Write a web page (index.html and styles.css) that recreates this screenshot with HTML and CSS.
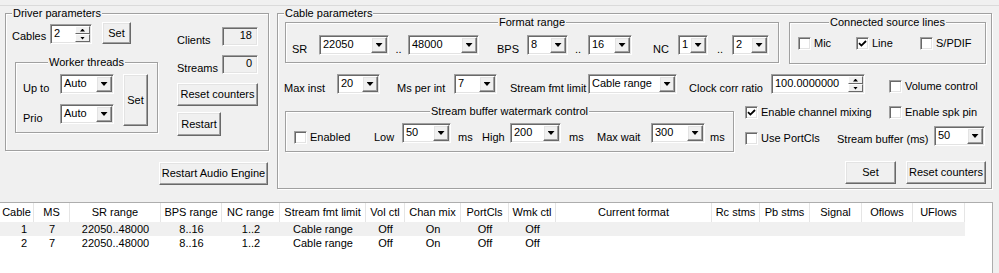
FILE: index.html
```html
<!DOCTYPE html>
<html lang="en">
<head>
  <meta charset="UTF-8">
  <title>Audio Cable Control Panel</title>
  <link rel="stylesheet" href="styles.css">
</head>
<body>
<div class="tabline"></div>
<div class="panel">
  <div class="left-col">
    <div class="group driver">
      <div class="group-title">Driver parameters</div>
      <div class="driver-body">
        <div class="drv-left">
          <div class="row cables-row">
            <span class="lbl w38">Cables</span>
            <div class="spin w42"><span class="val">2</span><span class="spin-btns"><span class="up"></span><span class="down"></span></span></div>
            <button class="btn set-small">Set</button>
          </div>
          <div class="group worker">
            <div class="group-title center">Worker threads</div>
            <div class="worker-body">
              <div class="worker-rows">
                <div class="row"><span class="lbl w37">Up to</span><div class="combo w54"><span class="val">Auto</span><span class="drop"></span></div></div>
                <div class="row"><span class="lbl w37">Prio</span><div class="combo w54"><span class="val">Auto</span><span class="drop"></span></div></div>
              </div>
              <button class="btn set-tall">Set</button>
            </div>
          </div>
        </div>
        <div class="drv-right">
          <div class="row readout-row"><span class="lbl">Clients</span><div class="readout">18</div></div>
          <div class="row readout-row"><span class="lbl">Streams</span><div class="readout">0</div></div>
          <button class="btn reset-drv">Reset counters</button>
          <button class="btn restart">Restart</button>
        </div>
      </div>
    </div>
    <button class="btn restart-engine">Restart Audio Engine</button>
  </div>

  <div class="group cable">
    <div class="group-title">Cable parameters</div>

    <div class="fmt-row">
      <div class="group fmt">
        <div class="group-title center">Format range</div>
        <div class="row fmt-body">
          <span class="lbl w27">SR</span>
          <div class="combo w70"><span class="val">22050</span><span class="drop"></span></div>
          <span class="lbl dots w19">..</span>
          <div class="combo w71"><span class="val">48000</span><span class="drop"></span></div>
          <span class="lbl ml18 w30">BPS</span>
          <div class="combo w41"><span class="val">8</span><span class="drop"></span></div>
          <span class="lbl dots w20">..</span>
          <div class="combo w44"><span class="val">16</span><span class="drop"></span></div>
          <span class="lbl ml21 w25">NC</span>
          <div class="combo w30"><span class="val">1</span><span class="drop"></span></div>
          <span class="lbl dots w24">..</span>
          <div class="combo w37"><span class="val">2</span><span class="drop"></span></div>
        </div>
      </div>
      <div class="group src">
        <div class="group-title center">Connected source lines</div>
        <div class="src-body">
          <label class="cbitem w58"><span class="cb"></span>Mic</label>
          <label class="cbitem w64"><span class="cb"><svg width="9" height="9" viewBox="0 0 9 9"><path d="M1 4.2l2.4 2.4L8 2" fill="none" stroke="#000" stroke-width="1.8"/></svg></span>Line</label>
          <label class="cbitem"><span class="cb"></span>S/PDIF</label>
        </div>
      </div>
    </div>

    <div class="row row-b">
      <span class="lbl w53">Max inst</span>
      <div class="combo w43"><span class="val">20</span><span class="drop"></span></div>
      <span class="lbl ml17 w57">Ms per int</span>
      <div class="combo w43"><span class="val">7</span><span class="drop"></span></div>
      <span class="lbl ml13 w78">Stream fmt limit</span>
      <div class="combo w89"><span class="val">Cable range</span><span class="drop"></span></div>
      <span class="lbl ml12 w82">Clock corr ratio</span>
      <div class="spin w94"><span class="val">100.0000000</span><span class="spin-btns"><span class="up"></span><span class="down"></span></span></div>
      <label class="cbitem ml24 raise1"><span class="cb"></span>Volume control</label>
    </div>

    <div class="row-c">
      <div class="group wmk">
        <div class="group-title center">Stream buffer watermark control</div>
        <div class="row wmk-body">
          <label class="cbitem w80 sink1"><span class="cb"></span>Enabled</label>
          <span class="lbl w28">Low</span>
          <div class="combo w49"><span class="val">50</span><span class="drop"></span></div>
          <span class="lbl ml7 w24">ms</span>
          <span class="lbl w28">High</span>
          <div class="combo w51"><span class="val">200</span><span class="drop"></span></div>
          <span class="lbl ml8 w28">ms</span>
          <span class="lbl w54">Max wait</span>
          <div class="combo w54"><span class="val">300</span><span class="drop"></span></div>
          <span class="lbl ml5">ms</span>
        </div>
      </div>
      <div class="opts">
        <div class="opts-top">
          <label class="cbitem w144"><span class="cb"><svg width="9" height="9" viewBox="0 0 9 9"><path d="M1 4.2l2.4 2.4L8 2" fill="none" stroke="#000" stroke-width="1.8"/></svg></span>Enable channel mixing</label>
          <label class="cbitem"><span class="cb"></span>Enable spk pin</label>
        </div>
        <div class="row opts-bottom">
          <label class="cbitem w92 raise1"><span class="cb"></span>Use PortCls</label>
          <span class="lbl w97 flat">Stream buffer (ms)</span>
          <div class="combo w51"><span class="val">50</span><span class="drop"></span></div>
        </div>
      </div>
    </div>

    <div class="btn-row">
      <button class="btn w51">Set</button>
      <button class="btn ml10 w80">Reset counters</button>
    </div>
  </div>
</div>

<div class="list">
  <div class="lv-head">
    <span>Cable</span><span>MS</span><span>SR range</span><span>BPS range</span><span>NC range</span><span>Stream fmt limit</span><span>Vol ctl</span><span>Chan mix</span><span>PortCls</span><span>Wmk ctl</span><span>Current format</span><span>Rc stms</span><span>Pb stms</span><span>Signal</span><span>Oflows</span><span>UFlows</span>
  </div>
  <div class="lv-row alt">
    <span>1</span><span>7</span><span>22050..48000</span><span>8..16</span><span>1..2</span><span>Cable range</span><span>Off</span><span>On</span><span>Off</span><span>Off</span><span></span><span></span><span></span><span></span><span></span><span></span>
  </div>
  <div class="lv-row">
    <span>2</span><span>7</span><span>22050..48000</span><span>8..16</span><span>1..2</span><span>Cable range</span><span>Off</span><span>On</span><span>Off</span><span>Off</span><span></span><span></span><span></span><span></span><span></span><span></span>
  </div>
</div>
</body>
</html>
```

FILE: styles.css
```css
* {
    box-sizing: border-box;
}

html, body {
    width: 999px;
    height: 273px;
    margin: 0;
    padding: 0;
    overflow: hidden;

    background: #f0f0f0;
    color: #000;
    font-family: "Liberation Sans", Arial, sans-serif;
    font-size: 11px;
    line-height: 13px;
}

.tabline {
    height: 6px;
    border-bottom: 1px solid #dadada;
}

.panel {
    height: 196px;
    padding-left: 5px;

    display: flex;
}

.left-col {
    width: 264px;

    display: flex;
    flex-direction: column;
}

/* group boxes */
.group {
    flex: none;
    display: flex;
    flex-direction: column;

    border: 1px solid #a0a0a0;
    box-shadow: inset 1px 1px 0 #fff, 1px 1px 0 #fff;
}

.group-title {
    align-self: flex-start;
    margin: -7px 0 0 6px;
    padding: 0 1px;

    background: #f0f0f0;
    white-space: nowrap;
}

.group-title.center {
    align-self: center;
    margin-left: 0;
}

/* generic rows and labels */
.row {
    display: flex;
    align-items: flex-end;
}

.lbl {
    flex: none;
    margin-bottom: -1px;
    white-space: nowrap;
}

.lbl.flat {
    margin-bottom: 0;
}

.dots {
    text-align: center;
}

/* buttons */
.btn {
    flex: none;
    padding: 0;

    font: inherit;
    color: #000;
    background: #f0f0f0;
    border: 1px solid;
    border-color: #fff #696969 #696969 #fff;
    box-shadow: inset -1px -1px 0 #a0a0a0, inset 1px 1px 0 #e3e3e3;
    white-space: nowrap;
}

/* combo boxes and spin edits */
.combo, .spin {
    flex: none;
    height: 20px;
    padding: 1px;

    display: flex;

    background: #fff;
    border: 1px solid;
    border-color: #a0a0a0 #fff #fff #a0a0a0;
    box-shadow: inset 1px 1px 0 #696969, inset -1px -1px 0 #e3e3e3;
}

.val {
    flex: 1;
    padding: 1px 2px 0;
    overflow: hidden;
    white-space: nowrap;
}

.drop {
    width: 16px;

    display: flex;
    align-items: center;
    justify-content: center;

    background: #f0f0f0;
    border: 1px solid;
    border-color: #fff #696969 #696969 #fff;
    box-shadow: inset -1px -1px 0 #a0a0a0, inset 1px 1px 0 #e3e3e3;
}

.drop::after {
    content: "";
    width: 7px;
    height: 4px;
    background: #000;
    clip-path: polygon(0 0, 100% 0, 50% 100%);
}

.spin-btns {
    width: 15px;

    display: flex;
    flex-direction: column;
}

.spin-btns .up, .spin-btns .down {
    flex: 1;

    display: flex;
    align-items: center;
    justify-content: center;

    background: #f0f0f0;
    border: 1px solid;
    border-color: #fff #696969 #696969 #fff;
}

.spin-btns .up::after, .spin-btns .down::after {
    content: "";
    width: 5px;
    height: 3px;
    background: #000;
}

.spin-btns .up::after {
    clip-path: polygon(50% 0, 100% 100%, 0 100%);
}

.spin-btns .down::after {
    clip-path: polygon(0 0, 100% 0, 50% 100%);
}

.readout {
    width: 36px;
    height: 19px;
    padding: 1px 5px 0 0;

    text-align: right;
    background: #f0f0f0;
    border: 1px solid;
    border-color: #a0a0a0 #fff #fff #a0a0a0;
    box-shadow: inset 1px 1px 0 #696969, inset -1px -1px 0 #e3e3e3;
}

/* check boxes */
.cbitem {
    flex: none;

    display: flex;
    align-items: center;
    gap: 3px;
    white-space: nowrap;
}

.cbitem.raise1 {
    margin-bottom: 1px;
}

.cbitem.sink1 {
    margin-bottom: -1px;
}

.cb {
    width: 13px;
    height: 13px;

    display: flex;
    align-items: center;
    justify-content: center;

    background: #fff;
    border: 1px solid;
    border-color: #a0a0a0 #fff #fff #a0a0a0;
    box-shadow: inset 1px 1px 0 #696969, inset -1px -1px 0 #e3e3e3;
}

/* driver parameters */
.driver {
    height: 138px;
    margin-top: 7px;
}

.driver-body {
    padding-top: 2px;

    display: flex;
}

.drv-left {
    width: 152px;

    display: flex;
    flex-direction: column;
}

.cables-row {
    padding-left: 6px;
}

.cables-row .lbl {
    margin-bottom: 1px;
}

.set-small {
    width: 29px;
    height: 22px;
    margin-left: 10px;
}

.worker {
    width: 143px;
    height: 71px;
    margin: 18px 0 0 9px;
}

.worker-body {
    padding: 5px 0 0 7px;

    display: flex;
    align-items: flex-start;
}

.worker-rows {
    display: flex;
    flex-direction: column;
    gap: 10px;
}

.set-tall {
    width: 25px;
    height: 52px;
    margin-left: 9px;
}

.drv-right {
    width: 81px;
    margin-left: 19px;

    display: flex;
    flex-direction: column;
    align-items: flex-start;
}

.readout-row {
    width: 81px;
    margin-top: 5px;
    justify-content: space-between;
}

.readout-row + .readout-row {
    margin-top: 9px;
}

.reset-drv {
    width: 81px;
    height: 23px;
    margin-top: 9px;
}

.restart {
    width: 44px;
    height: 24px;
    margin-top: 6px;
}

.restart-engine {
    align-self: flex-end;
    width: 109px;
    height: 23px;
    margin: 11px 1px 0 0;
}

/* cable parameters */
.cable {
    width: 715px;
    height: 176px;
    margin: 7px 0 0 8px;
}

.fmt-row {
    margin: 2px 0 0 7px;

    display: flex;
    align-items: flex-start;
}

.fmt {
    width: 494px;
    height: 41px;
}

.fmt-body {
    padding: 6px 0 0 6px;
}

.src {
    width: 197px;
    height: 42px;
    margin-left: 10px;
}

.src-body {
    padding: 8px 0 0 8px;

    display: flex;
    align-items: center;
}

.row-b {
    height: 20px;
    margin-top: 10px;
    padding-left: 6px;
}

.row-c {
    margin-top: 10px;
    padding-left: 7px;

    display: flex;
    align-items: flex-start;
}

.wmk {
    width: 449px;
    height: 41px;
    margin-top: 7px;
}

.wmk-body {
    padding: 5px 0 0 8px;
}

.opts {
    margin-left: 11px;
}

.opts-top {
    height: 16px;

    display: flex;
    align-items: center;
}

.opts-bottom {
    height: 20px;
    margin-top: 6px;
}

.btn-row {
    margin-top: 9px;
    padding-right: 5px;

    display: flex;
    justify-content: flex-end;
}

.btn-row .btn {
    height: 23px;
}

/* list view */
.list {
    width: 993px;
    height: 71px;

    background: #fff;
    border-top: 1px solid #adadad;
    border-right: 1px solid #adadad;
}

.lv-head, .lv-row {
    width: 965px;

    display: grid;
    grid-template-columns: 34px 36px 91px 61px 58px 86px 39px 56px 48px 47px 156px 48px 50px 52px 51px 52px;
}

.lv-head span {
    height: 19px;
    line-height: 19px;
    text-align: center;
    white-space: nowrap;
    overflow: hidden;
    border-right: 1px solid #e5e5e5;
}

.lv-row span {
    height: 14px;
    line-height: 14px;
    text-align: center;
    white-space: nowrap;
}

.lv-row span:first-child {
    padding-right: 7px;
    text-align: right;
}

.lv-row.alt {
    background: #f0f0f0;
}

/* sizes */
.w19 { width: 19px; }
.w20 { width: 20px; }
.w24 { width: 24px; }
.w25 { width: 25px; }
.w27 { width: 27px; }
.w28 { width: 28px; }
.w30 { width: 30px; }
.w37 { width: 37px; }
.w38 { width: 38px; }
.w41 { width: 41px; }
.w42 { width: 42px; }
.w43 { width: 43px; }
.w44 { width: 44px; }
.w49 { width: 49px; }
.w51 { width: 51px; }
.w53 { width: 53px; }
.w54 { width: 54px; }
.w57 { width: 57px; }
.w58 { width: 58px; }
.w64 { width: 64px; }
.w70 { width: 70px; }
.w71 { width: 71px; }
.w78 { width: 78px; }
.w80 { width: 80px; }
.w82 { width: 82px; }
.w89 { width: 89px; }
.w92 { width: 92px; }
.w94 { width: 94px; }
.w97 { width: 97px; }
.w144 { width: 144px; }

.ml5 { margin-left: 5px; }
.ml7 { margin-left: 7px; }
.ml8 { margin-left: 8px; }
.ml10 { margin-left: 10px; }
.ml12 { margin-left: 12px; }
.ml13 { margin-left: 13px; }
.ml17 { margin-left: 17px; }
.ml18 { margin-left: 18px; }
.ml21 { margin-left: 21px; }
.ml24 { margin-left: 24px; }
```
